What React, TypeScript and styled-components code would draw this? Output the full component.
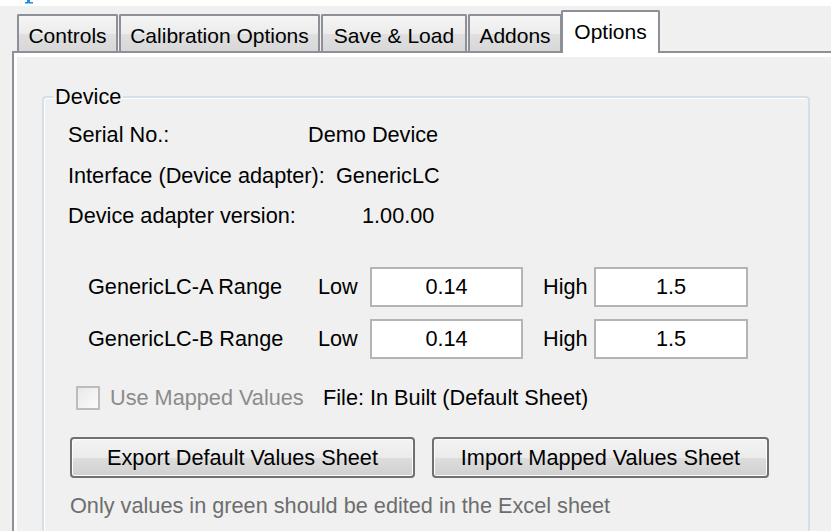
import styled, {createGlobalStyle} from 'styled-components';

const uiFont = '"Liberation Sans", Arial, sans-serif';

const GlobalStyle = createGlobalStyle`
	html, body {
		margin: 0;
		background: #fff;
	}
	body {
		font-family: ${uiFont};
		font-size: 21px;
		color: #000;
		overflow: hidden;
	}
`;

const Page = styled.div`
	display: flex;
	flex-direction: column;
	width: 831px;
	height: 531px;
	overflow: hidden;
`;

// strip above the window, where the foot of the page heading pokes through
const Caption = styled.div`
	height: 6px;
	padding-left: 25px;
	background: #fff;
`;

const Window = styled.div`
	flex: 1;
	display: flex;
	flex-direction: column;
	min-height: 0;
	padding: 4px 0 0 12px;
	background: #f0f0f0;
`;

const TabStrip = styled.div`
	display: flex;
	align-items: flex-start;
	gap: 1px;
	height: 41px;
	padding-left: 5px;
	position: relative;
	z-index: 1;
`;

const Tab = styled.div<{$active?: boolean; $width: number}>`
	box-sizing: border-box;
	display: flex;
	align-items: center;
	justify-content: center;
	width: ${(p) => p.$width}px;
	height: ${(p) => (p.$active ? 43 : 37)}px;
	margin-top: ${(p) => (p.$active ? 0 : 4)}px;
	margin-left: ${(p) => (p.$active ? -2 : 0)}px;
	padding: ${(p) => (p.$active ? '0 0 2px' : '5px 0 0')};
	border: 2px solid #8d9096;
	border-bottom: none;
	border-radius: 2px 2px 0 0;
	background: ${(p) =>
		p.$active
			? '#fff'
			: 'linear-gradient(#f5f5f5, #ececec 50%, #e0e0e0 51%, #d7d7d7)'};
	white-space: nowrap;
`;

const TabPanel = styled.div`
	flex: 1;
	display: flex;
	border-top: 2px solid #8d9096;
	border-left: 2px solid #8d9096;
	padding: 4px 0 0 3px;
	background: #fff;
`;

const TabPage = styled.div`
	flex: 1;
	padding: 28px 0 0 25px;
	background: #f0f0f0;
	font-size: 21.7px;
`;

const GroupBox = styled.fieldset`
	box-sizing: border-box;
	width: 768px;
	min-height: 480px;
	margin: 0;
	padding: 0;
	border: 2px solid #d5dfe5;
	border-radius: 4px;
	box-shadow: inset 1px 1px 0 #fff;
`;

const Legend = styled.legend`
	margin-left: 9px;
	padding: 0 2px;
	line-height: 24px;
`;

const GroupBody = styled.div`
	display: flex;
	flex-direction: column;
	padding: 6px 0 0 24px;
`;

const InfoRow = styled.div<{$valueAt: number}>`
	display: grid;
	grid-template-columns: ${(p) => p.$valueAt}px auto;
	align-items: center;
	height: 40px;
	white-space: nowrap;
	&:nth-child(2) {
		height: 41px;
	}
`;

const RangeRow = styled.div<{$first?: boolean}>`
	display: grid;
	grid-template-columns: 230px 52px 153px 71px 154px;
	align-items: center;
	height: 40px;
	margin: ${(p) => (p.$first ? 31 : 12)}px 0 0 20px;
	white-space: nowrap;
`;

const FieldLabel = styled.span<{$pad?: number}>`
	padding-left: ${(p) => p.$pad ?? 0}px;
`;

const RangeInput = styled.input`
	box-sizing: border-box;
	width: 100%;
	height: 40px;
	padding: 0;
	border: 2px solid #b4b4b4;
	background: #fff;
	font: inherit;
	color: #000;
	text-align: center;
	outline: none;
`;

const CheckRow = styled.div`
	display: flex;
	align-items: center;
	height: 24px;
	margin: 27px 0 0 8px;
	white-space: nowrap;
`;

const CheckBox = styled.span`
	box-sizing: border-box;
	width: 24px;
	height: 24px;
	border: 2px solid #bcbcbc;
	border-radius: 1px;
	background: linear-gradient(135deg, #e9e9e9, #fbfbfb);
`;

const CheckLabel = styled.span`
	width: 213px;
	margin-left: 10px;
	color: #8b8b8b;
`;

const ButtonRow = styled.div`
	display: flex;
	gap: 17px;
	margin: 27px 0 0 2px;
`;

const Button = styled.button<{$width: number}>`
	box-sizing: border-box;
	width: ${(p) => p.$width}px;
	height: 41px;
	padding: 0;
	border: 2px solid #707070;
	border-radius: 4px;
	background: linear-gradient(#f3f3f3, #ebebeb 50%, #dddddd 51%, #d0d0d0);
	box-shadow: inset 0 0 0 1px #fcfcfc;
	font: inherit;
	color: #000;
	white-space: nowrap;
`;

const Note = styled.div`
	margin: 16px 0 0 2px;
	line-height: 24px;
	color: #6d6d6d;
	white-space: nowrap;
`;

function HeadingFoot() {
	return (
		<svg width="9" height="4" viewBox="0 0 9 4" style={{display: 'block'}}>
			<rect x="2" y="0" width="3" height="3" fill="#1f8ce6" />
			<rect x="0" y="2" width="8" height="1.5" fill="#1f8ce6" />
		</svg>
	);
}

const tabs = [
	{label: 'Controls', width: 101},
	{label: 'Calibration Options', width: 201},
	{label: 'Save & Load', width: 146},
	{label: 'Addons', width: 94},
	{label: 'Options', width: 99, active: true},
];

const info = [
	{label: 'Serial No.:', value: 'Demo Device', at: 240},
	{label: 'Interface (Device adapter):', value: 'GenericLC', at: 268},
	{label: 'Device adapter version:', value: '1.00.00', at: 294},
];

const ranges = [
	{name: 'GenericLC-A Range', low: '0.14', high: '1.5'},
	{name: 'GenericLC-B Range', low: '0.14', high: '1.5'},
];

function App() {
	return (
		<Page>
			<GlobalStyle />
			<Caption>
				<HeadingFoot />
			</Caption>
			<Window>
				<TabStrip>
					{tabs.map((tab) => (
						<Tab key={tab.label} $active={tab.active} $width={tab.width}>
							{tab.label}
						</Tab>
					))}
				</TabStrip>
				<TabPanel>
					<TabPage>
						<GroupBox>
							<Legend>Device</Legend>
							<GroupBody>
								{info.map((row) => (
									<InfoRow key={row.label} $valueAt={row.at}>
										<span>{row.label}</span>
										<span>{row.value}</span>
									</InfoRow>
								))}
								{ranges.map((range, i) => (
									<RangeRow key={range.name} $first={i === 0}>
										<FieldLabel>{range.name}</FieldLabel>
										<FieldLabel>Low</FieldLabel>
										<RangeInput readOnly defaultValue={range.low} />
										<FieldLabel $pad={20}>High</FieldLabel>
										<RangeInput readOnly defaultValue={range.high} />
									</RangeRow>
								))}
								<CheckRow>
									<CheckBox />
									<CheckLabel>Use Mapped Values</CheckLabel>
									<span>File: In Built (Default Sheet)</span>
								</CheckRow>
								<ButtonRow>
									<Button $width={345}>Export Default Values Sheet</Button>
									<Button $width={337}>Import Mapped Values Sheet</Button>
								</ButtonRow>
								<Note>Only values in green should be edited in the Excel sheet</Note>
							</GroupBody>
						</GroupBox>
					</TabPage>
				</TabPanel>
			</Window>
		</Page>
	);
}

export default App;
